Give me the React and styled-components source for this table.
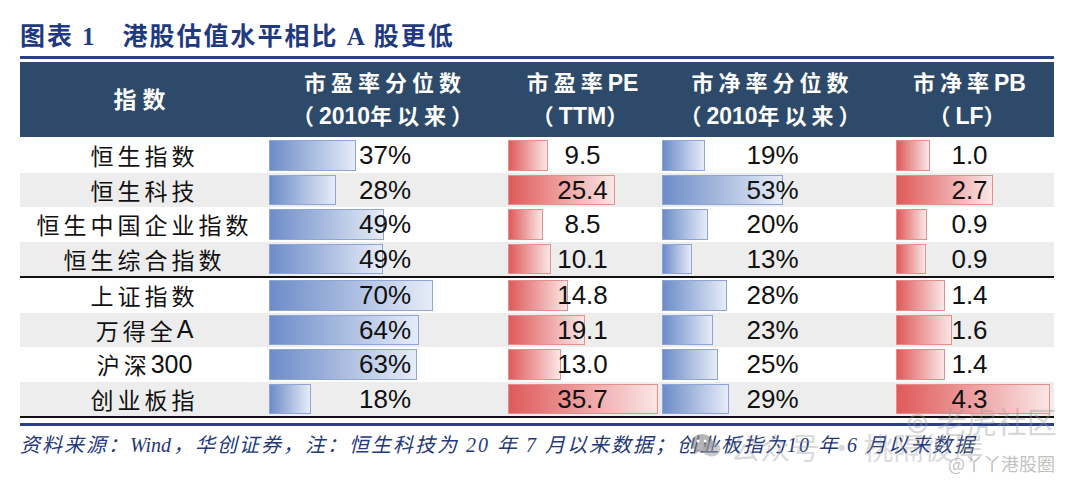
import React from 'react';
import styled, { createGlobalStyle } from 'styled-components';

const GlobalStyle = createGlobalStyle`
  body {
    margin: 0;
    background: #ffffff;
  }
`;

const CJK = `"Noto Sans CJK SC", sans-serif`;
const SANS = `"Liberation Sans", "Noto Sans CJK SC", sans-serif`;
const SERIF = `"Liberation Serif", "Noto Sans CJK SC", serif`;

const columns = [
  { key: 'pe', start: 4, tone: 'blue' },
  { key: 'ttm', start: 3, tone: 'red' },
  { key: 'pb', start: 2, tone: 'blue' },
  { key: 'lf', start: 11, tone: 'red' },
];

const groups = [
  [
    { name: '恒生指数', pe: ['37%', 87], ttm: ['9.5', 40], pb: ['19%', 43], lf: ['1.0', 34] },
    { name: '恒生科技', pe: ['28%', 67], ttm: ['25.4', 107], pb: ['53%', 121], lf: ['2.7', 97] },
    { name: '恒生中国企业指数', pe: ['49%', 115], ttm: ['8.5', 35], pb: ['20%', 46], lf: ['0.9', 31] },
    { name: '恒生综合指数', pe: ['49%', 114], ttm: ['10.1', 43], pb: ['13%', 30], lf: ['0.9', 30] },
  ],
  [
    { name: '上证指数', pe: ['70%', 164], ttm: ['14.8', 60], pb: ['28%', 65], lf: ['1.4', 49] },
    { name: '万得全A', pe: ['64%', 150], ttm: ['19.1', 77], pb: ['23%', 51], lf: ['1.6', 56] },
    { name: '沪深300', pe: ['63%', 148], ttm: ['13.0', 53], pb: ['25%', 56], lf: ['1.4', 49] },
    { name: '创业板指', pe: ['18%', 42], ttm: ['35.7', 150], pb: ['29%', 67], lf: ['4.3', 154] },
  ],
];

const Page = styled.div`
  position: relative;
  width: 1080px;
  height: 485px;
  padding: 21px 26px 0 20px;
  box-sizing: border-box;
  overflow: hidden;
`;

const Title = styled.h1`
  margin: 0;
  display: flex;
  align-items: baseline;
  font-family: ${SERIF};
  font-size: 25px;
  line-height: 31px;
  font-weight: 700;
  color: #1f3a80;
  letter-spacing: 2px;
`;

const TitleNo = styled.span`
  margin: 0 26px 0 8px;
`;

const Rule = styled.div`
  height: 3px;
  background: #2b3f86;
  margin-top: ${(p) => p.$top}px;
`;

const Grid = styled.div`
  display: grid;
  grid-template-columns: 245px 240px 155px 225px 169px;
`;

const Header = styled(Grid)`
  margin-top: 3px;
  height: 75px;
  background: #2e4a6a;
  color: #ffffff;
  margin-bottom: 1px;
`;

const HeadCell = styled.div`
  display: flex;
  flex-direction: column;
  align-items: center;
  justify-content: center;
  font-family: ${SANS};
  font-weight: 700;
  font-size: ${(p) => (p.$big ? 23 : 22)}px;
  line-height: 33px;
  letter-spacing: ${(p) => (p.$big ? 6 : 5)}px;
  padding-top: ${(p) => (p.$big ? 2 : 0)}px;
  white-space: nowrap;
`;

const Lat = styled.span`
  font-size: 23px;
  letter-spacing: 0;
`;

const Group = styled.div`
  border-bottom: 2px solid #111111;
`;

const Row = styled(Grid)`
  height: 34.5px;
  background: ${(p) => (p.$shade ? '#ededed' : '#ffffff')};
`;

const Name = styled.div`
  display: flex;
  align-items: center;
  justify-content: center;
  font-family: ${CJK};
  font-size: 23px;
  letter-spacing: 4px;
  padding-left: 4px;
  color: #111111;
  white-space: nowrap;
`;

const NameLatin = styled.span`
  font-family: ${SANS};
  font-size: 25px;
  letter-spacing: 0;
`;

const Cell = styled.div`
  display: grid;
  align-items: center;
  padding: 2px 0 2px ${(p) => p.$start}px;
`;

const Bar = styled.div`
  grid-area: 1 / 1;
  align-self: stretch;
  box-sizing: border-box;
  border: 1px solid ${(p) => (p.$tone === 'red' ? '#e58e8e' : '#8ea5d6')};
  background: ${(p) =>
    p.$tone === 'red'
      ? 'linear-gradient(to right, #df5a5a, #fbe6e6)'
      : 'linear-gradient(to right, #6d8cc8, #e6ecf8)'};
`;

const Value = styled.div`
  grid-area: 1 / 1;
  justify-self: center;
  margin-left: ${(p) => -p.$start}px;
  font-family: ${SANS};
  font-size: 26px;
  line-height: 30px;
  color: #111111;
  position: relative;
`;

const Footer = styled.div`
  margin-top: 6px;
  font-family: ${SERIF};
  font-style: italic;
  font-size: 20px;
  line-height: 26px;
  letter-spacing: 2px;
  color: #24387a;
  white-space: nowrap;
`;

const FootLatin = styled.span`
  letter-spacing: 0;
  margin-right: 2px;
`;

const Mark = styled.div`
  position: absolute;
  left: ${(p) => p.$x}px;
  top: ${(p) => p.$y}px;
  display: flex;
  align-items: center;
  gap: 8px;
  font-family: ${CJK};
  font-size: ${(p) => p.$size}px;
  color: rgba(150, 150, 150, ${(p) => p.$alpha});
  white-space: nowrap;
  pointer-events: none;
`;

const renderName = (name) => {
  const m = name.match(/^([^A-Za-z0-9]+)([A-Za-z0-9]*)$/);
  if (!m || !m[2]) return name;
  return (
    <>
      {m[1]}
      <NameLatin>{m[2]}</NameLatin>
    </>
  );
};

const WeChat = () => (
  <svg width="32" height="28" viewBox="0 0 32 28">
    <ellipse cx="12" cy="11" rx="11" ry="9" fill="rgba(120,120,120,0.55)" />
    <path d="M5 17 L4 23 L10 18.5 Z" fill="rgba(120,120,120,0.55)" />
    <ellipse cx="21.5" cy="17" rx="9" ry="7.5" fill="rgba(160,160,160,0.55)" />
    <circle cx="8" cy="9" r="1.5" fill="#fff" />
    <circle cx="15" cy="9" r="1.5" fill="#fff" />
  </svg>
);

export default function App() {
  return (
    <Page>
      <GlobalStyle />
      <Title>
        图表<TitleNo>1</TitleNo>港股估值水平相比 A 股更低
      </Title>
      <Rule $top={4} />
      <Header>
        <HeadCell $big>指数</HeadCell>
        <HeadCell>
          <span>市盈率分位数</span>
          <span>
            （<Lat>2010</Lat>年以来）
          </span>
        </HeadCell>
        <HeadCell>
          <span>
            市盈率<Lat>PE</Lat>
          </span>
          <span>
            （<Lat>TTM</Lat>）
          </span>
        </HeadCell>
        <HeadCell>
          <span>市净率分位数</span>
          <span>
            （<Lat>2010</Lat>年以来）
          </span>
        </HeadCell>
        <HeadCell>
          <span>
            市净率<Lat>PB</Lat>
          </span>
          <span>
            （<Lat>LF</Lat>）
          </span>
        </HeadCell>
      </Header>
      {groups.map((rows, gi) => (
        <Group key={gi}>
          {rows.map((row, ri) => (
            <Row key={row.name} $shade={ri % 2 === 1}>
              <Name>{renderName(row.name)}</Name>
              {columns.map((c) => (
                <Cell key={c.key} $start={c.start}>
                  <Bar $tone={c.tone} style={{ width: row[c.key][1] }} />
                  <Value $start={c.start}>{row[c.key][0]}</Value>
                </Cell>
              ))}
            </Row>
          ))}
        </Group>
      ))}
      <Rule $top={5} />
      <Footer>
        资料来源：<FootLatin>Wind</FootLatin>，华创证券，注：恒生科技为 20 年 7 月以来数据；创业板指为10 年 6 月以来数据
      </Footer>
      <Mark $x={905} $y={398} $size={30} $alpha={0.4}>
        ⊚ 老虎社区
      </Mark>
      <Mark $x={690} $y={424} $size={30} $alpha={0.35}>
        <WeChat />
        公众号 · 桃隔彼岸
      </Mark>
      <Mark $x={948} $y={450} $size={18} $alpha={0.6}>
        @丫丫港股圈
      </Mark>
    </Page>
  );
}
